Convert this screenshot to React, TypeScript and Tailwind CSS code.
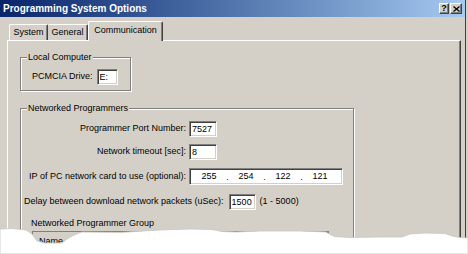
import * as React from 'react';

const sunken =
  'border border-t-[#808080] border-l-[#808080] border-b-white border-r-white bg-white shadow-[inset_1px_1px_0_#404040,inset_-1px_-1px_0_#d4d0c8]';

function GroupBox({
  label,
  className,
  children,
}: {
  label: string;
  className?: string;
  children: React.ReactNode;
}) {
  return (
    <div
      className={
        'relative shrink-0 border border-[#808080] shadow-[inset_1px_1px_0_#ffffff,1px_1px_0_#ffffff] ' +
        (className ?? '')
      }
    >
      <span className="absolute -top-[6px] left-[6px] bg-[#d4d0c8] px-[1px] leading-[11px]">
        {label}
      </span>
      {children}
    </div>
  );
}

function TextBox({ value, className }: { value: string; className?: string }) {
  return (
    <div className={sunken + ' flex shrink-0 items-center pl-[2px] leading-none ' + (className ?? '')}>
      {value}
    </div>
  );
}

function TitleButton({ children, className }: { children: React.ReactNode; className?: string }) {
  return (
    <div
      className={
        'flex h-[11px] items-center justify-center bg-[#d4d0c8] border border-t-white border-l-white border-r-[#404040] border-b-[#404040] shadow-[inset_-1px_-1px_0_#808080] ' +
        (className ?? '')
      }
    >
      {children}
    </div>
  );
}

const ipParts = ['255', '254', '122', '121'];

export default function App() {
  return (
    <div className="relative h-[254px] w-[468px] overflow-hidden bg-[#d4d0c8] font-['Liberation_Sans',Arial,sans-serif] text-[9px] text-black">
      <div className="w-[466px] border-r border-[#404040]">
        {/* Title bar */}
        <div className="flex h-[17px] items-center justify-between bg-gradient-to-r from-[#0a246a] to-[#a6caf0] pl-[3px] pr-[3px]">
          <span className="text-[10px] font-bold leading-none text-white">Programming System Options</span>
          <div className="flex items-center gap-[1px]">
            <TitleButton className="w-[10px]">
              <span className="text-[9px] font-bold leading-none">?</span>
            </TitleButton>
            <TitleButton className="w-[12px]">
              <svg width="7" height="6" viewBox="0 0 7 6">
                <path d="M0.5 0.5 L6.5 5.5 M6.5 0.5 L0.5 5.5" stroke="#000" strokeWidth="1.3" />
              </svg>
            </TitleButton>
          </div>
        </div>

        <div className="pl-[7px] pr-[4px] pt-[5px]">
          {/* Tabs */}
          <div className="flex h-[18px] items-end pl-[2px]">
            <div className="flex h-[16px] w-[39px] items-center justify-center rounded-t-[2px] border-l border-t border-white border-r border-r-[#404040] pt-[1px] shadow-[inset_-1px_0_0_#808080]">
              System
            </div>
            <div className="flex h-[16px] w-[40px] items-center justify-center rounded-t-[2px] border-t border-white border-r border-r-[#404040] pt-[1px] shadow-[inset_-1px_0_0_#808080]">
              General
            </div>
            <div className="relative z-10 -mb-px flex h-[20px] w-[75px] items-center justify-center rounded-t-[2px] border-l border-t border-white border-r border-r-[#404040] bg-[#d4d0c8] pb-[2px] shadow-[inset_-1px_0_0_#808080]">
              Communication
            </div>
          </div>

          {/* Panel */}
          <div className="border-l border-t border-white border-r border-r-[#404040] pb-[20px] pl-[12px] pt-[16px] shadow-[inset_-1px_0_0_#808080]">
            <GroupBox label="Local Computer" className="h-[34px] w-[111px]">
              <div className="flex items-center gap-[4px] pl-[11px] pt-[11px]">
                <span>PCMCIA Drive:</span>
                <TextBox value="E:" className="h-[16px] w-[21px]" />
              </div>
            </GroupBox>

            <GroupBox label="Networked Programmers" className="mt-[17px] w-[334px]">
              <div className="flex flex-col pb-[10px] pt-[12px]">
                <div className="flex items-center gap-[3px]">
                  <span className="w-[165px] text-right">Programmer Port Number:</span>
                  <TextBox value="7527" className="h-[16px] w-[28px]" />
                </div>
                <div className="mt-[7px] flex items-center gap-[3px]">
                  <span className="w-[165px] text-right">Network timeout [sec]:</span>
                  <TextBox value="8" className="h-[16px] w-[28px]" />
                </div>
                <div className="mt-[8px] flex items-center gap-[3px]">
                  <span className="w-[165px] text-right">IP of PC network card to use (optional):</span>
                  <div className={sunken + ' flex h-[17px] w-[154px] items-center pl-[4px] leading-none'}>
                    {ipParts.map((part, i) => (
                      <React.Fragment key={part}>
                        <span className="w-[30px] text-center">{part}</span>
                        {i < ipParts.length - 1 && <span className="w-[7px] pt-[2px] text-center">.</span>}
                      </React.Fragment>
                    ))}
                  </div>
                </div>
                <div className="mt-[9px] flex items-center pl-[3px]">
                  <span>Delay between download network packets (uSec):</span>
                  <TextBox value="1500" className="ml-[5px] h-[16px] w-[27px]" />
                  <span className="ml-[4px]">(1 - 5000)</span>
                </div>
                <div className="mt-[8px] pl-[10px] leading-[11px]">Networked Programmer Group</div>
                <div className="ml-[11px] mt-[2px] flex h-[30px] w-[297px] flex-col border border-[#808080] bg-white">
                  <div className="flex h-[14px] bg-[#d4d0c8]">
                    <div className="flex w-[208px] items-end border-r border-[#404040] pl-[6px] leading-[10px]">Name</div>
                    <div className="flex-1 border-r border-[#404040]" />
                  </div>
                </div>
              </div>
            </GroupBox>
          </div>
        </div>
      </div>

      {/* torn paper edge */}
      <svg
        className="absolute bottom-0 left-0"
        width="468"
        height="30"
        viewBox="0 224 468 30"
      >
        <path
          d="M0 229 L12 228.5 L26 230 L32 234 L37 241 L45 243 L62 243 L67 239 L74 235 L82 232 L120 232.5 L160 230 L190 229 L212 229.5 L222 231.5 L236 232 L260 231 L300 231 L326 232 L334 236.5 L350 237.5 L380 237 L402 237 L410 234 L425 233 L445 233.5 L452 236 L460 237.5 L468 238 L468 254 L0 254 Z"
          fill="#ffffff"
          stroke="#c8c6c2"
          strokeWidth="0.8"
        />
      </svg>
    </div>
  );
}
